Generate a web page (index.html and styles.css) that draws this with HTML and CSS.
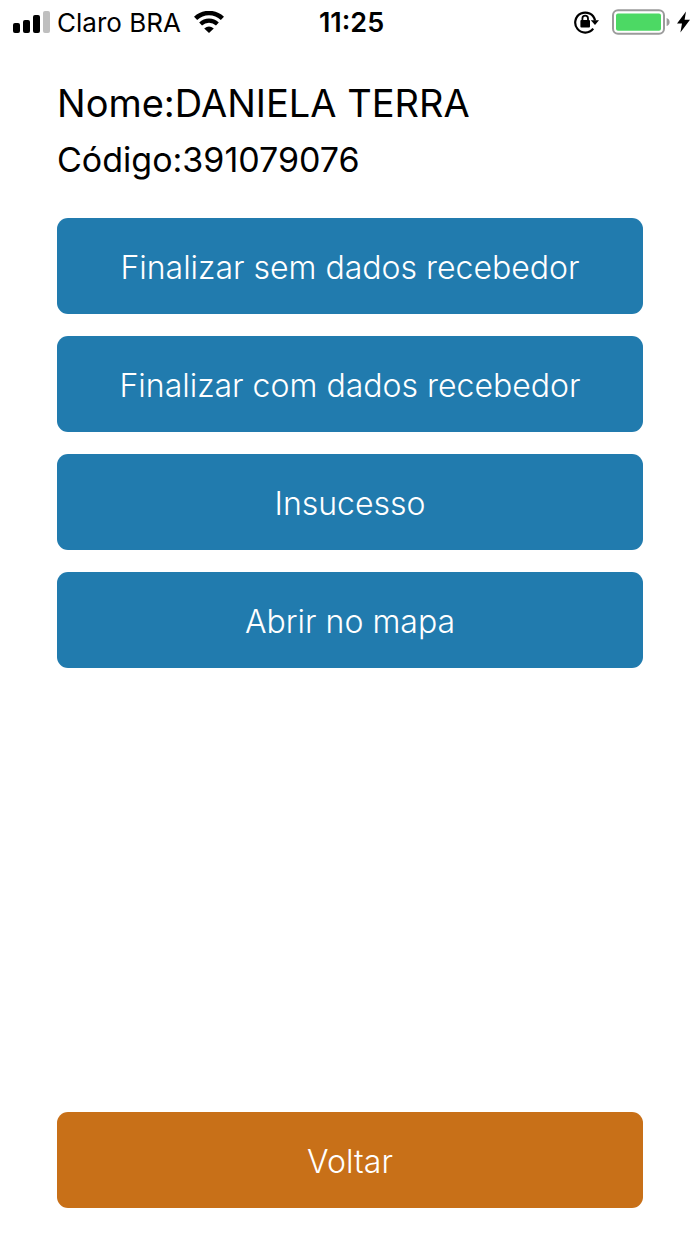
FILE: index.html
```html
<!DOCTYPE html>
<html lang="pt-BR">
<head>
  <meta charset="UTF-8" />
  <meta name="viewport" content="width=device-width, initial-scale=1.0"/>
  <title>Entrega</title>
  <link rel="stylesheet" href="styles.css">
</head>
<body>

  <header class="status-bar">
    <div class="status-left">
      <svg class="icon" width="37" height="22" viewBox="0 0 37 22" aria-hidden="true">
        <rect x="0" y="12" width="7" height="10" rx="2" />
        <rect x="10" y="9" width="7" height="13" rx="2" />
        <rect x="20" y="4" width="7" height="18" rx="2" />
        <rect x="30" y="0" width="7" height="22" rx="2" fill="#bfbfbf" />
      </svg>
      <span class="carrier">Claro BRA</span>
      <svg class="icon" width="30" height="22" viewBox="0 0 30 22" aria-hidden="true">
        <path d="M1.6 7.4A19.5 19.5 0 0 1 28.4 7.4" fill="none" stroke="#000" stroke-width="4.6" />
        <path d="M6.6 13A12.4 12.4 0 0 1 23.4 13" fill="none" stroke="#000" stroke-width="4.2" />
        <path d="M10.2 17.6Q15 13.2 19.8 17.6L15 22Z" />
      </svg>
    </div>
    <time class="clock">11:25</time>
    <div class="status-right">
      <svg class="icon" width="25" height="24" viewBox="0 0 25 24" aria-hidden="true">
        <path d="M19.2 18.6A10 10 0 1 1 21 10.5" fill="none" stroke="#000" stroke-width="2.2" />
        <path d="M16.8 10.2H25L21 15Z" />
        <rect x="6.4" y="10" width="9.6" height="7.4" rx="1" />
        <path d="M8.4 11V8.4a2.8 2.8 0 0 1 5.6 0V11" fill="none" stroke="#000" stroke-width="1.8" />
      </svg>
      <svg class="icon" width="58" height="26" viewBox="0 0 58 26" aria-hidden="true">
        <rect x="1" y="1.2" width="51" height="23.6" rx="5" fill="none" stroke="#9b9b9b" stroke-width="2" />
        <rect x="4" y="4.4" width="45" height="17.4" rx="2" fill="#4cd964" />
        <path d="M54.6 9Q57.6 10 57.6 13T54.6 17Z" fill="#9b9b9b" />
      </svg>
      <svg class="icon" width="13" height="22" viewBox="0 0 13 22" aria-hidden="true">
        <path d="M9 0.4L0 12.6H5L3.4 21.6L13 8.8H7.6Z" />
      </svg>
    </div>
  </header>

  <main class="container">
    <h1 class="name">Nome:DANIELA TERRA</h1>
    <p class="code">Código:391079076</p>

    <div class="actions">
      <button type="button" class="btn">Finalizar sem dados recebedor</button>
      <button type="button" class="btn">Finalizar com dados recebedor</button>
      <button type="button" class="btn">Insucesso</button>
      <button type="button" class="btn">Abrir no mapa</button>
    </div>

    <button type="button" class="btn btn-back">Voltar</button>
  </main>

</body>
</html>
```

FILE: styles.css
```css
* {
  box-sizing: border-box;
}

body {
  margin: 0;
  min-height: 100vh;
  display: flex;
  flex-direction: column;
  font-family: Inter, 'Liberation Sans', sans-serif;
  background: #fff;
  color: #000;
}

.status-bar {
  display: grid;
  grid-template-columns: 1fr auto 1fr;
  align-items: center;
  height: 44px;
  padding: 0 10px 0 13px;
}

.status-left,
.status-right {
  display: flex;
  align-items: center;
}

.status-left {
  gap: 7px;
}

.carrier {
  margin-right: 6px;
}

.status-right {
  justify-content: flex-end;
  gap: 7px;
}

.status-right .icon:first-child {
  margin-right: 6px;
}

.icon {
  display: block;
  flex: none;
}

.carrier {
  font-size: 26px;
}

.clock {
  font-size: 27px;
  font-weight: 600;
}

.container {
  flex: 1;
  display: flex;
  flex-direction: column;
  padding: 30px 57px 36px;
}

.name,
.code {
  margin: 0;
  font-weight: 400;
}

.name {
  font-size: 38px;
  line-height: 58px;
}

.code {
  font-size: 34px;
  line-height: 56px;
}

.actions {
  display: flex;
  flex-direction: column;
  gap: 22px;
  margin: 30px 0;
}

.btn {
  width: 100%;
  height: 96px;
  padding: 2px 0 0;
  border: none;
  border-radius: 11px;
  background: #217bae;
  color: #fff;
  font-family: inherit;
  font-size: 32px;
  font-weight: 300;
  cursor: pointer;
}

.btn-back {
  margin-top: auto;
  background: #c87018;
}
```
